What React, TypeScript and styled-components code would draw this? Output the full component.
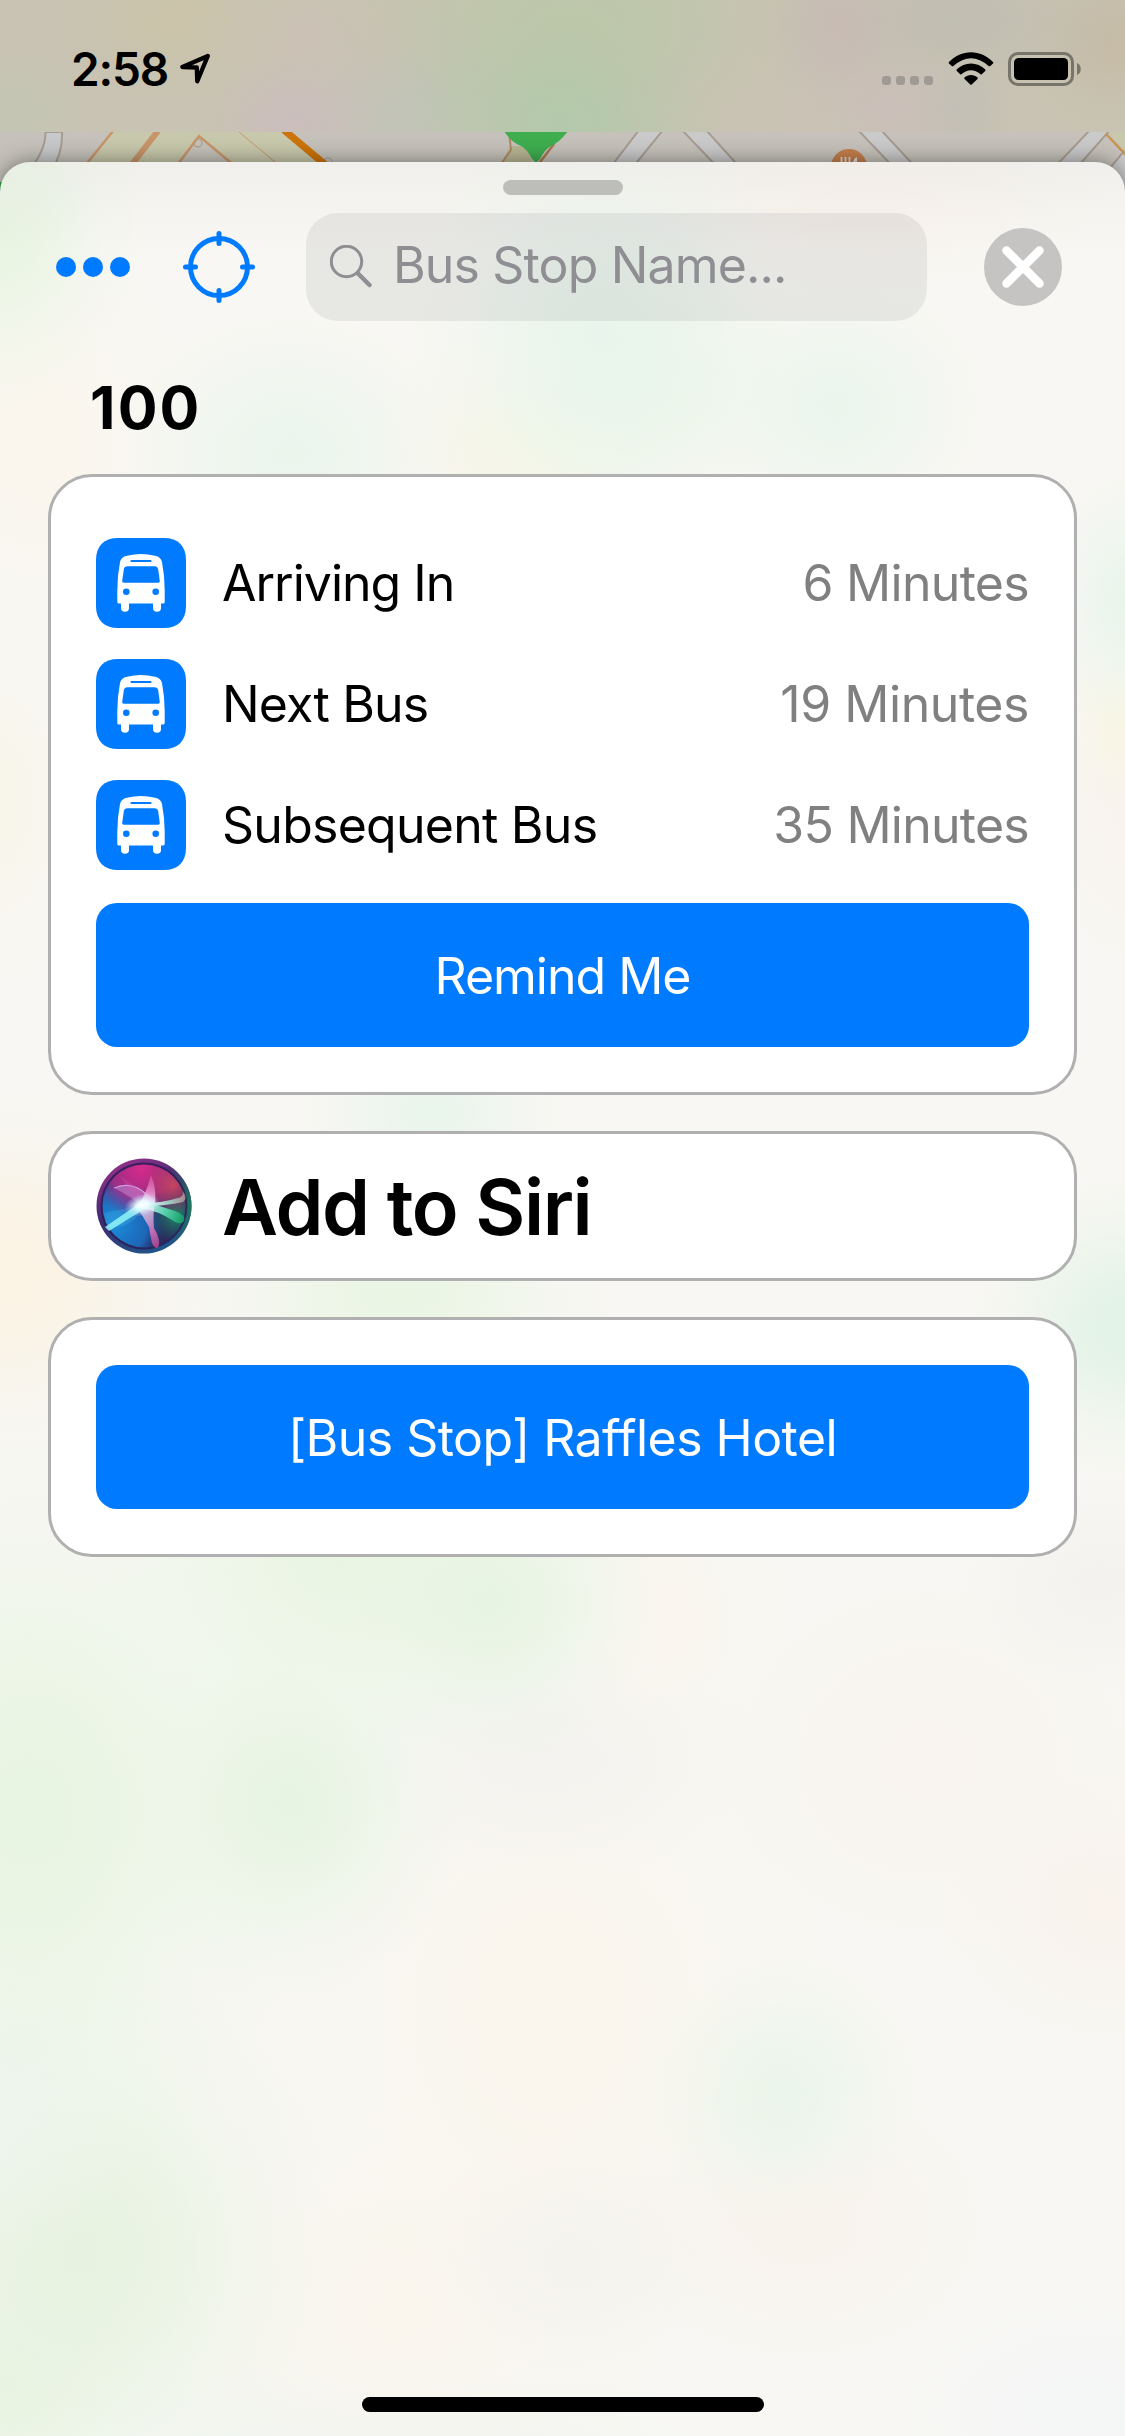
import React from "react";
import styled, { createGlobalStyle } from "styled-components";

type Blob = [x: number, y: number, rx: number, ry: number, rgb: string, alpha: number];

const blobs = (list: Blob[]) =>
  list
    .map(
      ([x, y, rx, ry, rgb, a]) =>
        `radial-gradient(${rx}px ${ry}px at ${x}px ${y}px, rgba(${rgb},${a}) 0%, rgba(${rgb},${a * 0.8}) 30%, rgba(${rgb},${a * 0.25}) 70%, rgba(${rgb},0) 100%)`
    )
    .join(",");

const GREEN = "232,245,226";
const MINT = "233,245,236";
const CREAM = "251,246,236";
const PEACH = "249,242,235";
const GREY = "242,241,238";

const statusTint = blobs([
  [560, 125, 150, 110, "176,202,170", 0.8],
  [570, 30, 260, 170, "184,200,166", 0.75],
  [290, 125, 90, 70, "203,188,190", 0.8],
  [330, 50, 150, 90, "204,192,182", 0.7],
  [180, 20, 120, 80, "204,196,166", 0.7],
  [10, 110, 90, 70, "194,200,182", 0.6],
  [400, 100, 130, 90, "192,195,188", 0.8],
  [835, 30, 90, 90, "200,186,181", 0.8],
  [890, 110, 90, 70, "202,190,186", 0.8],
  [950, 20, 180, 80, "190,188,178", 0.7],
  [960, 110, 60, 60, "189,189,183", 0.6],
  [1110, 40, 90, 90, "198,186,164", 0.8],
  [760, 100, 180, 120, "203,194,182", 0.7],
]);

const sheetTint = blobs([
  [0, 60, 140, 190, GREEN, 1],
  [600, 170, 190, 220, MINT, 1],
  [640, 220, 160, 140, GREEN, 0.7],
  [835, 245, 150, 130, MINT, 0.9],
  [290, 290, 170, 140, MINT, 0.9],
  [870, 30, 250, 100, PEACH, 0.9],
  [520, 290, 160, 120, "247,245,228", 0.8],
  [40, 280, 150, 220, CREAM, 0.8],
  [1125, 440, 80, 130, MINT, 1],
  [1125, 560, 70, 90, "248,246,228", 0.9],
  [1125, 650, 90, 160, PEACH, 0.7],
  [0, 640, 90, 180, "248,246,232", 0.8],
  [430, 950, 130, 90, MINT, 1],
  [0, 1110, 220, 180, "251,242,225", 0.9],
  [400, 1135, 210, 100, GREEN, 0.9],
  [1125, 1165, 150, 150, "226,243,230", 1],
  [340, 1400, 260, 200, GREEN, 0.9],
  [490, 1440, 180, 160, "230,244,226", 0.9],
  [660, 1460, 130, 150, "250,246,238", 0.9],
  [1100, 1420, 140, 110, GREY, 0.9],
  [30, 1650, 290, 380, GREEN, 1],
  [290, 1640, 180, 200, "230,244,226", 0.95],
  [540, 1590, 220, 130, GREY, 0.8],
  [930, 1600, 230, 200, PEACH, 0.6],
  [1100, 1745, 160, 140, "249,242,236", 0.9],
  [550, 1850, 280, 350, CREAM, 0.8],
  [0, 1910, 160, 190, "238,245,239", 0.9],
  [770, 1930, 150, 140, "233,245,234", 1],
  [570, 2090, 150, 120, GREY, 0.9],
  [80, 2090, 260, 300, "231,243,225", 1],
  [800, 2060, 200, 150, PEACH, 0.8],
  [400, 2150, 260, 260, CREAM, 0.7],
  [0, 2230, 150, 140, GREEN, 0.9],
  [380, 2280, 340, 90, "238,244,242", 0.8],
  [1080, 2250, 240, 150, "244,246,248", 0.7],
]);

const GlobalStyle = createGlobalStyle`
  * { box-sizing: border-box; }
  body {
    margin: 0;
    background: #f7f7f4;
    font-family: Inter, "Liberation Sans", sans-serif;
    -webkit-font-smoothing: antialiased;
  }
`;

const Screen = styled.div`
  width: 1125px;
  height: 2436px;
  display: flex;
  flex-direction: column;
  overflow: hidden;
  background: #c5c1ba;
`;

const StatusBar = styled.header`
  position: relative;
  z-index: 2;
  flex: none;
  height: 132px;
  display: flex;
  align-items: flex-start;
  padding: 52px 43px 0 71px;
  background: ${statusTint}, #c8c3b2;
`;

const Clock = styled.div`
  width: 109px;
  height: 34px;
  line-height: 34px;
  font-size: 46px;
  font-weight: 600;
  letter-spacing: -1.2px;
  white-space: nowrap;
`;

const StatusIcons = styled.div`
  display: flex;
  margin-left: auto;
  height: 34px;
`;

const SignalDots = styled.div`
  display: flex;
  align-items: flex-end;
  gap: 5px;
  height: 33px;
  margin-right: 15px;
`;

const SignalDot = styled.span`
  width: 9px;
  height: 9px;
  border-radius: 3px;
  background: #9f9b94;
`;

const BatterySlot = styled.span`
  display: flex;
  margin-left: 14px;
`;

const MapStrip = styled.svg`
  flex: none;
  display: block;
`;

const Sheet = styled.main`
  position: relative;
  flex: none;
  height: 2274px;
  margin-top: -34px;
  padding-top: 18px;
  display: flex;
  flex-direction: column;
  border-radius: 30px 30px 0 0;
  background: linear-gradient(rgba(226, 226, 222, 0.35), rgba(240, 240, 238, 0) 90px), ${sheetTint}, #f8f7f3;
  box-shadow: 0 0 22px rgba(0, 0, 0, 0.45);
`;

const Grabber = styled.div`
  align-self: center;
  width: 120px;
  height: 15px;
  border-radius: 7.5px;
  background: #bdbdba;
`;

const Toolbar = styled.div`
  height: 108px;
  margin-top: 18px;
  padding: 0 63px 0 56px;
  display: flex;
  align-items: center;
`;

const IconButton = styled.button<{ $gap?: number }>`
  display: flex;
  padding: 0;
  border: 0;
  background: none;
  margin-left: ${(p) => p.$gap ?? 0}px;
`;

const SearchField = styled.label`
  display: flex;
  align-items: flex-start;
  width: 621px;
  height: 108px;
  margin-left: 51px;
  padding: 32px 24px 0;
  gap: 21px;
  border-radius: 32px;
  background: rgba(118, 118, 122, 0.12);
`;

const Placeholder = styled.span`
  height: 40px;
  line-height: 40px;
  font-size: 50px;
  letter-spacing: -0.85px;
  color: #8e8e93;
  white-space: nowrap;
`;

const Title = styled.h1`
  margin: 57px 0 0 90px;
  height: 60px;
  line-height: 60px;
  font-size: 59px;
  font-weight: 700;
  letter-spacing: 2.2px;
  color: #000;
`;

const CardStack = styled.div`
  display: flex;
  flex-direction: column;
  gap: 36px;
  margin-top: 36px;
  padding: 0 48px;
`;

const Card = styled.section<{ $pad: string }>`
  display: flex;
  flex-direction: column;
  padding: ${(p) => p.$pad};
  border: 3px solid #b0b0b0;
  border-radius: 44px;
  background: #fff;
`;

const Rows = styled.div`
  display: flex;
  flex-direction: column;
  gap: 31px;
  margin-bottom: 33px;
`;

const Row = styled.div`
  display: flex;
  align-items: center;
  height: 90px;
`;

const Label = styled.span<{ $ls: number }>`
  margin-left: 36px;
  font-size: 50px;
  line-height: 90px;
  letter-spacing: ${(p) => p.$ls}px;
  color: #000;
  white-space: nowrap;
`;

const Value = styled.span<{ $ls: number }>`
  margin-left: auto;
  font-size: 50px;
  line-height: 90px;
  letter-spacing: ${(p) => p.$ls}px;
  color: #808080;
  white-space: nowrap;
`;

const ActionButton = styled.button<{ $ls: number }>`
  height: 144px;
  padding: 2px 0 0;
  border: 0;
  border-radius: 21px;
  background: #007aff;
  color: #fff;
  font-family: inherit;
  font-size: 50px;
  letter-spacing: ${(p) => p.$ls}px;
`;

const SiriRow = styled.div`
  display: flex;
  align-items: center;
  height: 96px;
`;

const SiriLabel = styled.span`
  margin-left: 30px;
  padding-top: 2px;
  font-size: 77px;
  line-height: 96px;
  font-weight: 600;
  letter-spacing: -1.4px;
  white-space: nowrap;
`;

const HomeIndicator = styled.div`
  align-self: center;
  width: 402px;
  height: 15px;
  margin: auto 0 24px;
  border-radius: 8px;
  background: #000;
`;

const LocationArrow = () => (
  <svg width="32" height="34" viewBox="0 0 32 34" fill="none" stroke="#000" strokeWidth="4.300" strokeLinejoin="round">
    <path d="M27.800 4L2.400 15L16.800 15.500L17.200 29.300Z" />
  </svg>
);

const Wifi = () => (
  <svg width="46" height="34" viewBox="0 0 46 34" fill="#000">
    <path d="M0.8 10.2C13 -3.2 33 -3.2 45.2 10.2Q45.6 11 45 11.6L42 14.2Q41.2 14.6 40.6 14Q23 -1.6 5.4 14Q4.8 14.6 4 14.2L1 11.6Q.4 11 .8 10.2Z" />
    <path d="M8.6 17.6C16.5 9.4 29.5 9.4 37.4 17.6Q37.8 18.3 37.2 18.9L33.8 22.2Q33.2 22.6 32.6 22.2Q23 14.4 13.4 22.2Q12.8 22.6 12.2 22.2L8.8 18.9Q8.2 18.3 8.6 17.6Z" />
    <path d="M16.4 25.6C20 22.1 26 22.1 29.6 25.6Q30 26.3 29.5 26.9L23.7 32.6Q23 33.2 22.3 32.6L16.5 26.9Q16 26.3 16.4 25.6Z" />
  </svg>
);

const Battery = () => (
  <svg width="74" height="34" viewBox="0 0 74 34">
    <rect x="1.5" y="1.5" width="63" height="31" rx="8.5" fill="none" stroke="#77746b" strokeWidth="3" />
    <rect x="6" y="6" width="54" height="22" rx="4.5" fill="#000" />
    <path d="M69 11C74 12.500 74 21.500 69 23Z" fill="#77746b" />
  </svg>
);

const MapBackdrop = () => (
  <MapStrip width="1125" height="64" viewBox="0 0 1125 64">
    <rect width="1125" height="64" fill="#c6c2bb" />
    <path d="M45.500 0Q46 17 30 38L52 38Q63 20 62 0Z" fill="#c8c9ca" stroke="#a79c92" strokeWidth="2" />
    <path d="M113 0L80 40L332 40L285 0Z" fill="#c8c8ac" />
    <path d="M199 4L172 40L242 40Z" fill="#c6c2bb" />
    <circle cx="198" cy="11" r="4" fill="none" stroke="#a9a795" strokeWidth="1.500" />
    <circle cx="328" cy="30" r="4" fill="none" stroke="#aeaaa4" strokeWidth="1.500" />
    <g fill="none" stroke="#c8956a">
      <path d="M113 -1L80 40" strokeWidth="2.500" />
      <path d="M158 -1L126 40" strokeWidth="6" />
      <path d="M172 40L199 4L242 40" strokeWidth="2.500" />
      <path d="M239 0L287 40" strokeWidth="1" />
    </g>
    <path d="M284 -2L334 40" stroke="#cc7409" strokeWidth="7" />
    <path d="M510 14L500 34L534 34L526 14Z" fill="#bab795" />
    <path d="M554 12L537 34" stroke="#a9764d" strokeWidth="2.500" />
    <path d="M509 0L511 18L501 32" fill="none" stroke="#b08965" strokeWidth="2" />
    <path d="M504 -1Q511 10 521 14Q527 17 532 27L536 31L540 27Q545 17 551 14Q560 10 568 -1Z" fill="#3eae4f" />
    <g fill="#cacaca" stroke="#a79c92" strokeWidth="2">
      <path d="M639 -2L607 40L629 40L663 -2Z" />
      <path d="M682 -2L722 40L744 40L706 -2Z" />
      <path d="M858 -2L898 40L920 40L881 -2Z" />
      <path d="M1090 -2L1050 40L1073 40L1110 -2Z" />
      <path d="M1130 12L1090 60L1125 64L1130 64Z" />
    </g>
    <path d="M1108 -1L1127 22L1127 -1Z" fill="#c8c8ac" />
    <path d="M1106 2L1127 24" stroke="#c99550" strokeWidth="2.500" />
    <circle cx="849" cy="35" r="18" fill="#c67f4b" />
    <path d="M841.500 25V33M845.500 25V33M849.500 25V33" stroke="#ddd" strokeWidth="1.800" />
    <path d="M853 33Q853 26 857 25V33Z" fill="#ddd" />
    <rect x="0" y="50" width="3" height="14" fill="#2fa544" />
  </MapStrip>
);

const MoreDots = () => (
  <svg width="74" height="20" viewBox="0 0 74 20" fill="#007aff">
    <circle cx="10" cy="10" r="10" />
    <circle cx="37" cy="10" r="10" />
    <circle cx="64" cy="10" r="10" />
  </svg>
);

const Crosshair = () => (
  <svg width="72" height="72" viewBox="0 0 72 72" fill="none" stroke="#007aff" strokeWidth="5" strokeLinecap="round">
    <circle cx="36" cy="36" r="28.500" />
    <path d="M36 2.500V12.500M36 59.500V69.500M2.500 36H12.500M59.500 36H69.500" />
  </svg>
);

const Magnifier = () => (
  <svg width="42" height="43" viewBox="0 0 42 43" fill="none" stroke="#8e8e93" strokeLinecap="round">
    <circle cx="16.500" cy="16.500" r="15.200" strokeWidth="3" />
    <path d="M28 28.500L39.500 40" strokeWidth="4.500" />
  </svg>
);

const CloseIcon = () => (
  <svg width="78" height="78" viewBox="0 0 78 78">
    <circle cx="39" cy="39" r="39" fill="#c5c4c3" />
    <path d="M22.500 22.500L55.500 55.500M55.500 22.500L22.500 55.500" stroke="#fff" strokeWidth="8.500" strokeLinecap="round" />
  </svg>
);

const BusTile = () => (
  <svg width="90" height="90" viewBox="0 0 90 90">
    <path
      d="M22 0H68C82 0 90 8 90 22V68C90 82 82 90 68 90H22C8 90 0 82 0 68V22C0 8 8 0 22 0Z"
      fill="#007aff"
    />
    <path
      d="M24 24Q25 19 31 17.800Q45 14.200 59 17.800Q65 19 66 24Q68.700 38 68.700 52V64Q68.700 65.600 67 65.600H65V70Q65 73.800 61 73.800Q57 73.800 57 70V65.600H33V70Q33 73.800 29 73.800Q25 73.800 25 70V65.600H23Q21.300 65.600 21.300 64V52Q21.300 38 24 24Z"
      fill="#fff"
    />
    <path d="M35.500 23H54.500" stroke="#007aff" strokeWidth="2.200" strokeLinecap="round" />
    <path d="M31.500 28.300H58.500Q61.700 28.300 62.200 31.500L63.800 43Q64 44.800 62.200 44.800H27.800Q26 44.800 26.200 43L27.800 31.500Q28.300 28.300 31.500 28.300Z" fill="#007aff" />
    <circle cx="30.300" cy="53.700" r="3.300" fill="#007aff" />
    <circle cx="59.700" cy="53.700" r="3.300" fill="#007aff" />
  </svg>
);

const SiriOrb = () => (
  <svg width="96" height="96" viewBox="0 0 96 96">
    <defs>
      <linearGradient id="rim" x1="0.25" y1="0" x2="0.75" y2="1">
        <stop offset="0" stopColor="#96308c" />
        <stop offset="0.45" stopColor="#3d2c6e" />
        <stop offset="1" stopColor="#1d5a8c" />
      </linearGradient>
      <radialGradient id="rimGreen" cx="1" cy="0.5" r="0.45">
        <stop offset="0" stopColor="#1c7a5c" />
        <stop offset="1" stopColor="#1c7a5c" stopOpacity="0" />
      </radialGradient>
      <radialGradient id="pink" cx="0.46" cy="0.05" r="0.6">
        <stop offset="0" stopColor="#d72b8c" />
        <stop offset="0.6" stopColor="#b02c88" stopOpacity="0.85" />
        <stop offset="1" stopColor="#7a2c86" stopOpacity="0" />
      </radialGradient>
      <radialGradient id="red" cx="0.85" cy="0.25" r="0.36">
        <stop offset="0" stopColor="#c84560" />
        <stop offset="1" stopColor="#b03c66" stopOpacity="0" />
      </radialGradient>
      <radialGradient id="blue" cx="0.15" cy="0.72" r="0.6">
        <stop offset="0" stopColor="#1b8ddb" />
        <stop offset="0.65" stopColor="#1c6cc0" stopOpacity="0.9" />
        <stop offset="1" stopColor="#1c4a98" stopOpacity="0" />
      </radialGradient>
      <radialGradient id="teal" cx="0.88" cy="0.62" r="0.32">
        <stop offset="0" stopColor="#1d8a68" />
        <stop offset="1" stopColor="#1d6a68" stopOpacity="0" />
      </radialGradient>
      <radialGradient id="glow">
        <stop offset="0" stopColor="#fff" />
        <stop offset="0.35" stopColor="#eff" stopOpacity="0.9" />
        <stop offset="1" stopColor="#bdf" stopOpacity="0" />
      </radialGradient>
      <linearGradient id="petalGreen" gradientUnits="userSpaceOnUse" x1="48" y1="47" x2="88" y2="62">
        <stop offset="0" stopColor="#e8fffa" />
        <stop offset="0.5" stopColor="#5fe0b8" />
        <stop offset="1" stopColor="#139b62" />
      </linearGradient>
      <linearGradient id="petalPink" gradientUnits="userSpaceOnUse" x1="48" y1="47" x2="60" y2="90">
        <stop offset="0" stopColor="#fff" stopOpacity="0.9" />
        <stop offset="0.6" stopColor="#f07cc0" />
        <stop offset="1" stopColor="#c8489a" />
      </linearGradient>
      <linearGradient id="petalLight" gradientUnits="userSpaceOnUse" x1="50" y1="47" x2="90" y2="40">
        <stop offset="0" stopColor="#e6fff8" />
        <stop offset="0.6" stopColor="#a6e8d8" stopOpacity="0.8" />
        <stop offset="1" stopColor="#c9a0a0" stopOpacity="0.7" />
      </linearGradient>
      <linearGradient id="spike" gradientUnits="userSpaceOnUse" x1="50" y1="48" x2="56" y2="18">
        <stop offset="0" stopColor="#fff" stopOpacity="0.95" />
        <stop offset="0.5" stopColor="#f3a0dc" stopOpacity="0.7" />
        <stop offset="1" stopColor="#f070c0" stopOpacity="0.45" />
      </linearGradient>
    </defs>
    <circle cx="48" cy="48" r="47.500" fill="url(#rim)" />
    <circle cx="48" cy="48" r="47.500" fill="url(#rimGreen)" />
    <circle cx="48" cy="48" r="43.500" fill="#2b1a56" opacity="0.8" />
    <circle cx="48" cy="48" r="41.500" fill="#2b2a5c" />
    <circle cx="48" cy="48" r="41.500" fill="url(#blue)" />
    <circle cx="48" cy="48" r="41.500" fill="url(#teal)" />
    <circle cx="48" cy="48" r="41.500" fill="url(#pink)" />
    <circle cx="48" cy="48" r="41.500" fill="url(#red)" />
    <path d="M18 30Q32 22 47 33Q55 38 60 46L46 48Q34 38 18 30Z" fill="#c9a8ee" opacity="0.4" />
    <path d="M18 30Q32 24 45 32Q52 37 58 43" fill="none" stroke="#e3c8ff" strokeWidth="1.200" opacity="0.6" />
    <path d="M8 55Q30 50 46 48L40 60Q24 74 10 66Z" fill="#53c8f4" opacity="0.22" />
    <path d="M24 18Q36 34 44 46L50 56L58 50Q42 28 24 18Z" fill="#e05cb4" opacity="0.25" />
    <path d="M55 17Q62 34 58 52L42 48Q51 34 55 17Z" fill="url(#spike)" />
    <path d="M48 45Q66 45 84 39.500Q88 37 87 33Q92 41 87 44Q74 47 48 49Z" fill="url(#petalLight)" />
    <path d="M46 44Q62 47 79 53Q90 57 88 63Q85 68 76 62Q62 53 45 50Z" fill="url(#petalGreen)" opacity="0.9" />
    <path d="M40 48Q47 58 53 69Q54 76 56 85Q59 92 62.500 89Q65 82 58 70Q57 62 58 50Z" fill="url(#petalPink)" opacity="0.75" />
    <path d="M48 42L50 50Q34 60 13 73L9 69Q28 56 48 42Z" fill="#8bf0f5" opacity="0.9" />
    <ellipse cx="46" cy="47" rx="18" ry="11" fill="url(#glow)" transform="rotate(-14 46 47)" />
  </svg>
);

const arrivals = [
  { label: "Arriving In", value: "6 Minutes", labelSpacing: -1, valueSpacing: -0.7 },
  { label: "Next Bus", value: "19 Minutes", labelSpacing: -0.85, valueSpacing: -0.45 },
  { label: "Subsequent Bus", value: "35 Minutes", labelSpacing: -0.75, valueSpacing: -0.75 },
];

export default function App() {
  return (
    <>
      <GlobalStyle />
      <Screen>
        <StatusBar>
          <Clock>2:58</Clock>
          <LocationArrow />
          <StatusIcons>
            <SignalDots>
              {[0, 1, 2, 3].map((i) => (
                <SignalDot key={i} />
              ))}
            </SignalDots>
            <Wifi />
            <BatterySlot>
              <Battery />
            </BatterySlot>
          </StatusIcons>
        </StatusBar>
        <MapBackdrop />
        <Sheet>
          <Grabber />
          <Toolbar>
            <IconButton aria-label="More">
              <MoreDots />
            </IconButton>
            <IconButton aria-label="Locate" $gap={53}>
              <Crosshair />
            </IconButton>
            <SearchField>
              <Magnifier />
              <Placeholder>Bus Stop Name...</Placeholder>
            </SearchField>
            <IconButton aria-label="Close" $gap={57}>
              <CloseIcon />
            </IconButton>
          </Toolbar>
          <Title>100</Title>
          <CardStack>
            <Card $pad="61px 45px 45px">
              <Rows>
                {arrivals.map((a) => (
                  <Row key={a.label}>
                    <BusTile />
                    <Label $ls={a.labelSpacing}>{a.label}</Label>
                    <Value $ls={a.valueSpacing}>{a.value}</Value>
                  </Row>
                ))}
              </Rows>
              <ActionButton $ls={-1}>Remind Me</ActionButton>
            </Card>
            <Card $pad="24px 45px">
              <SiriRow>
                <SiriOrb />
                <SiriLabel>Add to Siri</SiriLabel>
              </SiriRow>
            </Card>
            <Card $pad="45px">
              <ActionButton $ls={-0.55}>[Bus Stop] Raffles Hotel</ActionButton>
            </Card>
          </CardStack>
          <HomeIndicator />
        </Sheet>
      </Screen>
    </>
  );
}
